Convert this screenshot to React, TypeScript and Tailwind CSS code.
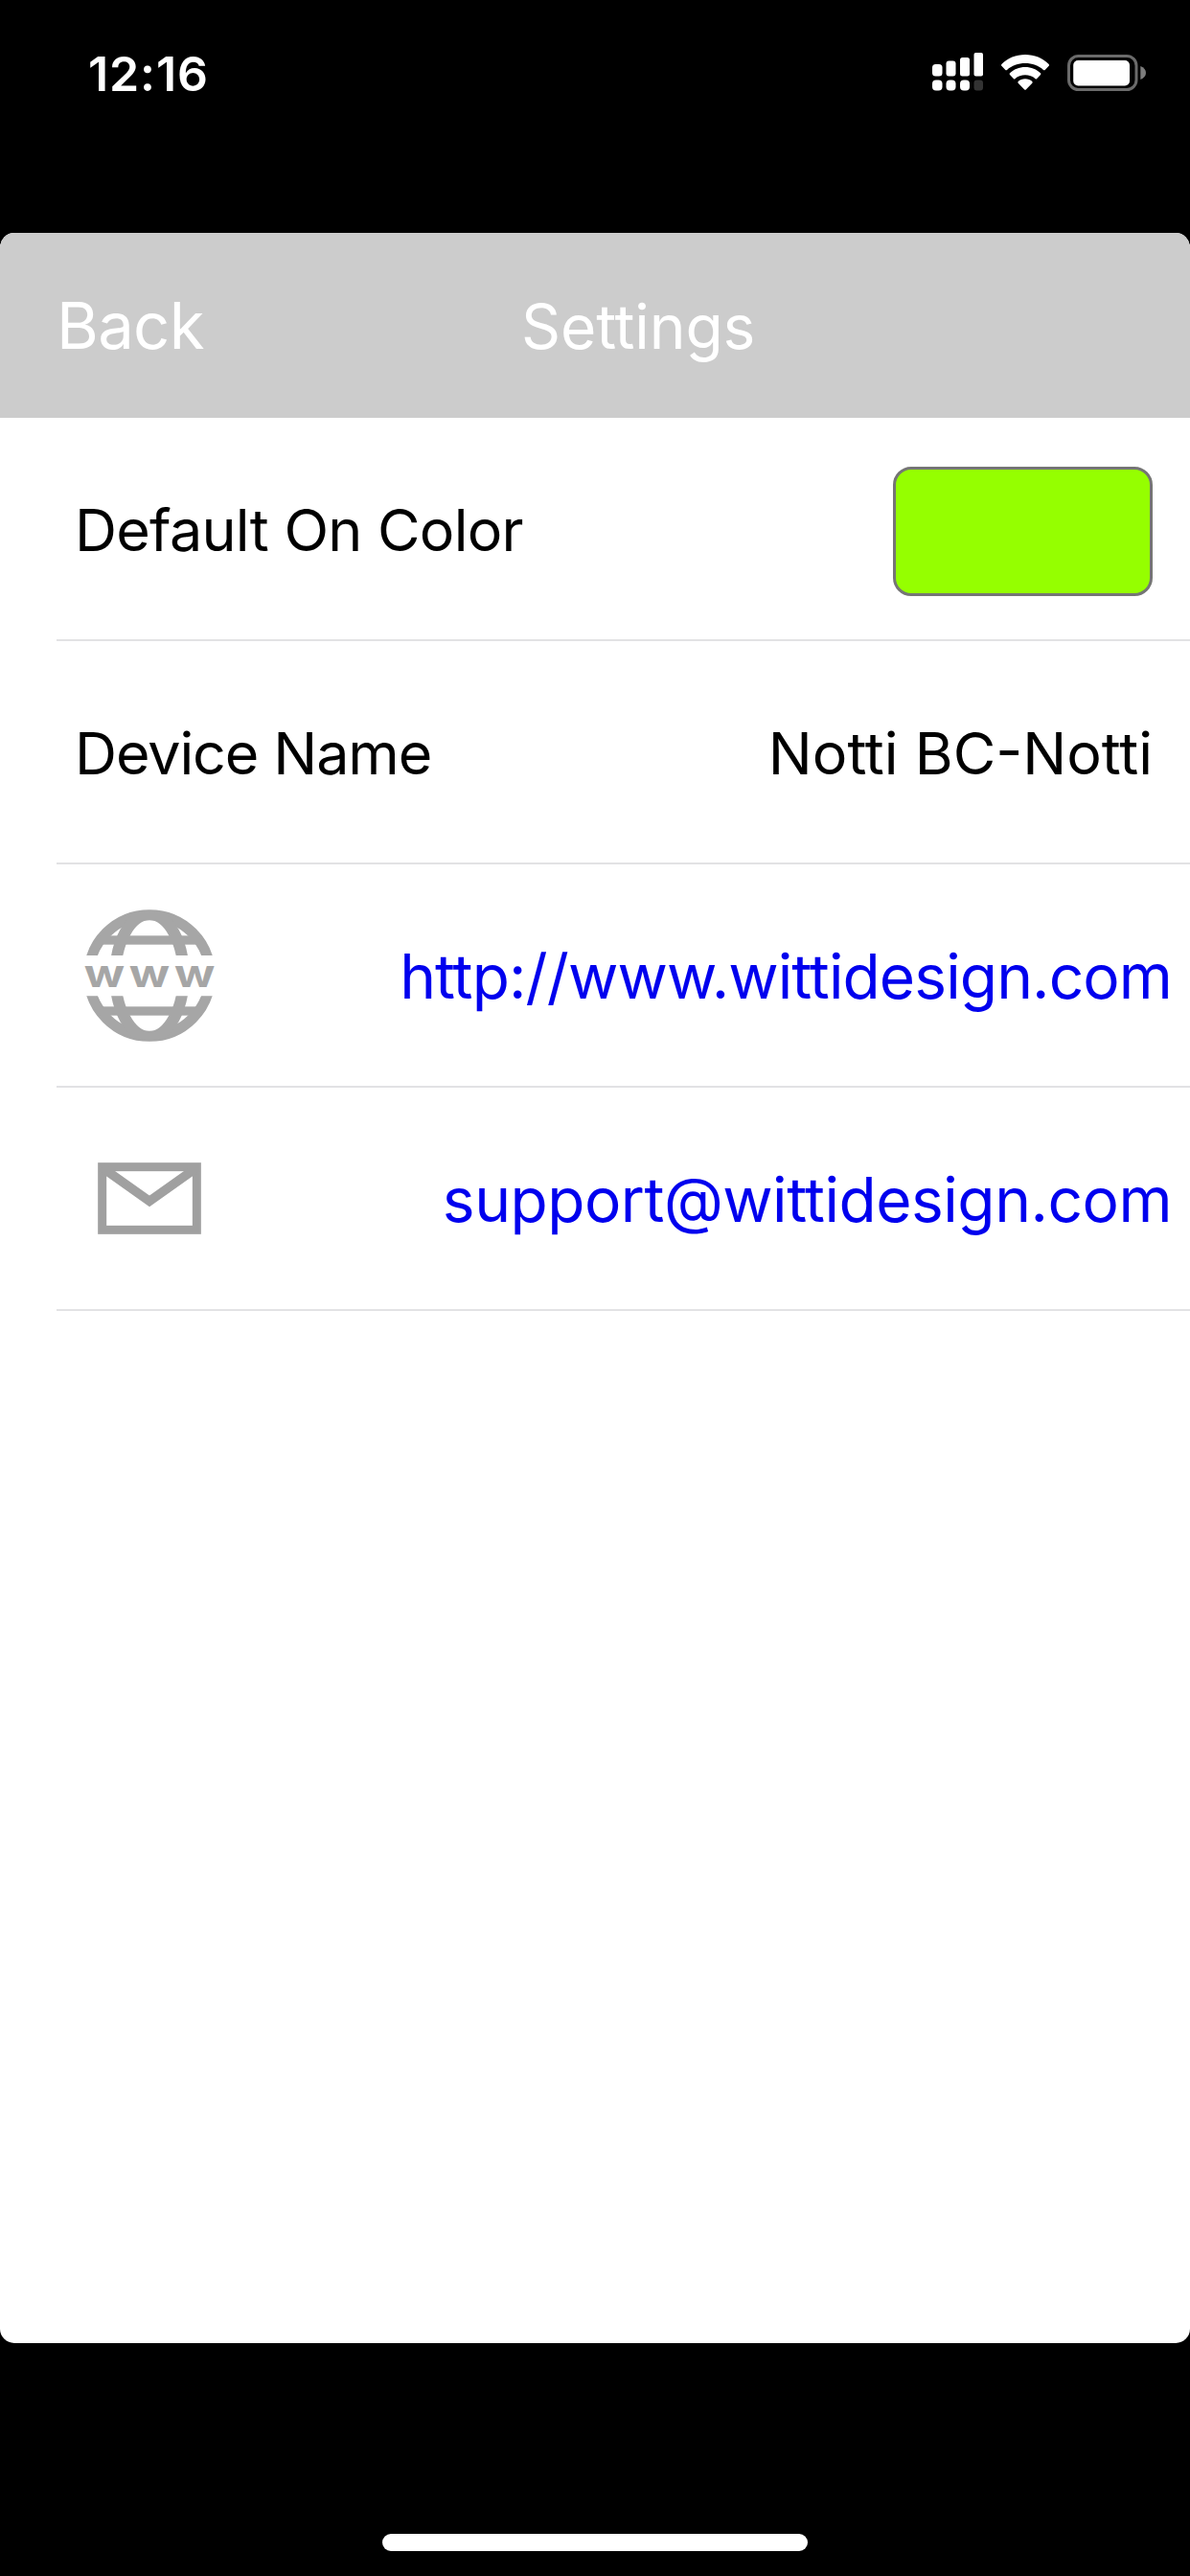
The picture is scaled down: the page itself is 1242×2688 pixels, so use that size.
import type { ReactNode } from 'react'

function SignalIcon() {
  return (
    <svg width="54" height="40" viewBox="0 0 54 40">
      <g fill="#fff">
        <rect x="0" y="12" width="10.5" height="12.5" rx="3.5" />
        <rect x="14.5" y="8.5" width="10" height="16" rx="3" />
        <rect x="29" y="5" width="10" height="19.5" rx="2.5" />
        <rect x="43.5" y="0" width="9.5" height="24.5" rx="2" />
        <rect x="0" y="28.5" width="10.5" height="11" rx="4" />
        <rect x="14.5" y="28.5" width="10" height="11" rx="4" />
        <rect x="29" y="28.5" width="10" height="11" rx="4" />
      </g>
      <rect x="43.5" y="28.5" width="9.5" height="11" rx="3" fill="#333" />
    </svg>
  )
}

function WifiIcon() {
  return (
    <svg width="50" height="38" viewBox="0 0 150 114" fill="#fff">
      <path d="M75 0 C46 0 20 11 1 30 Q-1 33 1 35 L13 48 Q15 50 18 48 C33 34 53 27 75 27 C97 27 117 34 132 48 Q135 50 137 48 L149 35 Q151 33 149 30 C130 11 104 0 75 0 Z" />
      <path d="M75 39 C56 39 39 46 27 58 Q24 60 27 63 L39 76 Q41 78 44 75 C52 68 63 64 75 64 C87 64 98 68 106 75 Q109 78 111 76 L123 63 Q126 60 123 58 C111 46 94 39 75 39 Z" />
      <path d="M75 76 C66 76 59 79 53 84 Q51 87 53 89 L72 109 Q75 112 78 109 L97 89 Q99 87 97 84 C91 79 84 76 75 76 Z" />
    </svg>
  )
}

function BatteryIcon() {
  return (
    <svg width="82" height="38" viewBox="0 0 82 38">
      <rect x="1.5" y="1.5" width="70.5" height="35" rx="10" fill="none" stroke="#6b6b6b" strokeWidth="3" />
      <rect x="6.2" y="6" width="58.8" height="26.5" rx="5" fill="#fff" />
      <path d="M76.3 12 C80 13.5 82 16 82 19 C82 22 80 24.5 76.3 26 Z" fill="#7d7d7d" />
    </svg>
  )
}

function GlobeIcon() {
  return (
    <svg className="shrink-0" width="138" height="138" viewBox="80 86 414 414">
      <defs>
        <clipPath id="halves">
          <rect x="80" y="86" width="414" height="144" />
          <rect x="80" y="357" width="414" height="144" />
        </clipPath>
        <clipPath id="disc">
          <circle cx="287" cy="293" r="200" />
        </clipPath>
      </defs>
      <g clipPath="url(#halves)">
        <circle cx="287" cy="293" r="190" fill="none" stroke="#a6a6a6" strokeWidth="33" />
        <g clipPath="url(#disc)">
          <ellipse cx="287" cy="293" rx="107" ry="192" fill="none" stroke="#a6a6a6" strokeWidth="36" />
          <rect x="100" y="168" width="374" height="28" fill="#a6a6a6" />
          <rect x="100" y="390" width="374" height="28" fill="#a6a6a6" />
        </g>
      </g>
      <g fill="#a6a6a6" fontFamily="Inter, sans-serif" fontWeight="700" fontSize="121">
        <text x="82" y="328" textLength="127" lengthAdjust="spacingAndGlyphs">w</text>
        <text x="223" y="328" textLength="127" lengthAdjust="spacingAndGlyphs">w</text>
        <text x="365" y="328" textLength="127" lengthAdjust="spacingAndGlyphs">w</text>
      </g>
    </svg>
  )
}

function MailIcon() {
  return (
    <svg className="shrink-0" width="108" height="75" viewBox="0 0 324 225" fill="none" stroke="#a0a0a0">
      <rect x="14" y="14" width="296" height="197" strokeWidth="27" />
      <path d="M14 16 L162 121 L310 16" strokeWidth="29" />
    </svg>
  )
}

function Row({ className, children }: { className: string; children: ReactNode }) {
  return (
    <li>
      <div className={`flex h-[231px] items-center justify-between ${className}`}>{children}</div>
      <div className="ml-[59px] h-[2px] bg-[#e2e2e4]" />
    </li>
  )
}

export default function App() {
  return (
    <div className="flex h-[2688px] w-[1242px] flex-col bg-black font-['Inter','Liberation_Sans',sans-serif] font-normal whitespace-nowrap">
      <header className="flex h-[243px] items-start justify-between pl-[92px] pr-[46px] text-white">
        <span className="mt-[47px] text-[50px] leading-[60px] font-semibold tracking-[0.9px]">12:16</span>
        <div className="mt-[55px] flex">
          <SignalIcon />
          <div className="mt-[2px] ml-[18px] flex gap-[19px]">
            <WifiIcon />
            <BatteryIcon />
          </div>
        </div>
      </header>

      <main className="h-[2202px] overflow-hidden rounded-[15px] bg-white">
        <nav className="flex h-[193px] items-center bg-[#ccc] pl-[59px] text-white">
          <button className="w-[485px] text-left text-[67px] leading-[80px] tracking-[-0.7px]">Back</button>
          <h1 className="mt-[2px] text-[64px] leading-[80px] tracking-[-0.1px]">Settings</h1>
        </nav>

        <ul className="text-[61px] leading-[74px] text-black">
          <Row className="pl-[78px] pr-[39px]">
            <span className="mt-[2px] tracking-[-0.74px]">Default On Color</span>
            <span className="mt-[6px] h-[135px] w-[271px] rounded-[19px] border-[3px] border-[#757575] bg-[#95ff00]" />
          </Row>
          <Row className="pl-[78px] pr-[39px]">
            <span className="mt-[2px] tracking-[-1.1px]">Device Name</span>
            <span className="mt-[2px]">Notti BC-Notti</span>
          </Row>
          <Row className="pl-[87px] pr-[19px]">
            <GlobeIcon />
            <a className="mt-[2px] text-[64px] tracking-[-0.88px] text-[#0000ee]">http://www.wittidesign.com</a>
          </Row>
          <Row className="pl-[102px] pr-[19px]">
            <MailIcon />
            <a className="mt-[2px] text-[64px] tracking-[-0.48px] text-[#0000ee]">support@wittidesign.com</a>
          </Row>
        </ul>
      </main>

      <footer className="flex flex-1 items-end justify-center pb-[26px]">
        <div className="h-[18px] w-[444px] rounded-full bg-white" />
      </footer>
    </div>
  )
}
